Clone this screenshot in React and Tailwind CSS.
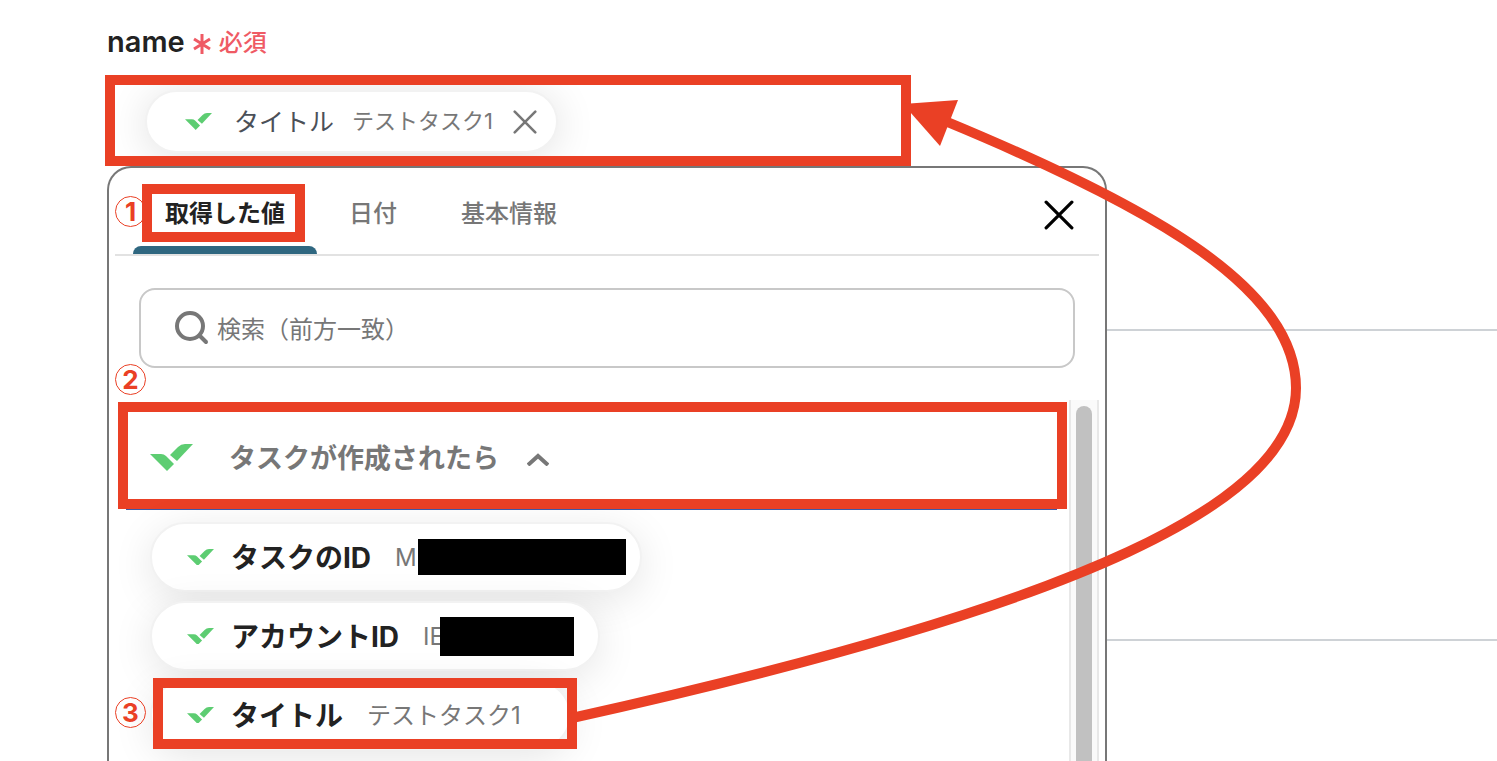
import { useState } from "react";

const tabs = ["取得した値", "日付", "基本情報"];

const values = [
    { label: "タスクのID", value: "M", maskClass: "ml-px h-9 w-[208px]", endClass: "pr-3.5" },
    { label: "アカウントID", value: "IE", maskClass: "-ml-1 h-[39px] w-[134px]", endClass: "pr-6" },
    { label: "タイトル", value: "テストタスク1", maskClass: "", endClass: "pr-12" },
];

function BrandMark({ className }) {
    return (
        <svg viewBox="0 0 43 27" className={className} fill="#5dcd72" aria-hidden="true">
            <path d="M0 10H11Q14 10 16 12L24 20L17 27L14 24z" />
            <path d="M20 11L28 3Q31 0 35 0H43L27 17z" />
        </svg>
    );
}

function CrossIcon({ className }) {
    return (
        <svg viewBox="0 0 28 28" className={className} fill="none" stroke="currentColor" strokeWidth="3" strokeLinecap="round" aria-hidden="true">
            <path d="M2 2l24 24M26 2L2 26" />
        </svg>
    );
}

// Numbered step marker that floats over the panel
function StepNumber({ children, className }) {
    return (
        <span className={`absolute left-[6px] z-10 flex size-[31px] items-center justify-center rounded-full border border-[#ea4025] text-[26px] leading-none font-bold text-[#ea4025] ${className}`}>
            {children}
        </span>
    );
}

function ValueChip({ item }) {
    return (
        <li>
            <button
                type="button"
                className={`flex h-[70px] items-center rounded-full border-2 border-[#f2f2f2] bg-white pl-[35px] shadow-[0_8px_40px_rgba(0,0,0,0.1)] ${item.endClass}`}
            >
                <BrandMark className="mr-[17px] w-[27px]" />
                <span className="mr-6 pt-0.5 text-[28px] font-bold text-[#222]">{item.label}</span>
                <span className="pt-0.5 text-2xl text-[#777]">{item.value}</span>
                {item.maskClass && <span className={`relative bg-black ${item.maskClass}`} />}
            </button>
        </li>
    );
}

export default function App() {
    const [activeTab, setActiveTab] = useState(tabs[0]);
    const [open, setOpen] = useState(true);
    const [search, setSearch] = useState("");

    return (
        <main className="relative flex h-screen flex-col overflow-hidden bg-white pl-[107px] font-['Inter','Noto_Sans_CJK_JP',sans-serif]">
            <h1 className="flex h-[75px] shrink-0 items-center gap-2 pt-2 text-[29px] font-semibold text-[#222]">
                name
                <span className="flex items-center gap-2 text-2xl font-medium text-[#ef5a64]">
                    <svg viewBox="0 0 18 20" className="mt-1 w-[18px]" fill="none" stroke="currentColor" strokeWidth="3" aria-hidden="true">
                        <path d="M9 0v20M1 5l16 10M17 5L1 15" />
                    </svg>
                    <span className="pt-0.5">必須</span>
                </span>
            </h1>

            <div className="relative z-10 -ml-0.5 flex h-[91px] w-[806px] shrink-0 items-center overflow-hidden border-10 border-[#ea4025] pt-0.5 pl-[30px]">
                <div className="flex h-[63px] items-center rounded-full border-2 border-[#f2f2f2] bg-white pr-[19px] pl-[38px] shadow-[0_4px_40px_rgba(0,0,0,0.12)]">
                    <BrandMark className="mr-[22px] w-[27px]" />
                    <span className="mr-[18px] pt-0.5 text-[25px] text-[#4b5058]">タイトル</span>
                    <span className="mr-5 text-[22px] text-[#777]">テストタスク1</span>
                    <button type="button" aria-label="削除" className="text-[#777]">
                        <CrossIcon className="size-6" />
                    </button>
                </div>
            </div>

            <div className="flex min-h-0 flex-1">
                <section className="relative flex min-w-0 basis-[1000px] flex-col rounded-t-3xl border-2 border-b-0 border-[#777] px-1.5">
                    <StepNumber className="top-7">1</StepNumber>
                    <StepNumber className="top-[196px]">2</StepNumber>
                    <StepNumber className="top-[529px]">3</StepNumber>

                    <div className="flex h-22 shrink-0 items-end border-b-2 border-[#e2e2e2] pr-[25px] pl-[18px]">
                        {tabs.map((tab) => (
                            <button
                                key={tab}
                                type="button"
                                onClick={() => setActiveTab(tab)}
                                className={`relative h-[68px] px-8 pb-3 text-2xl ${tab === activeTab ? "font-bold text-[#222]" : "font-medium text-[#777]"}`}
                            >
                                {tab}
                                {tab === activeTab && (
                                    <>
                                        <span className="absolute inset-x-0 bottom-0 h-2 rounded-t-lg bg-[#2f6780]" />
                                        <span className="absolute -top-0.5 right-3 bottom-3 left-[9px] z-20 border-10 border-[#ea4025]" />
                                    </>
                                )}
                            </button>
                        ))}
                        <button type="button" aria-label="閉じる" className="mb-6 ml-auto text-black">
                            <CrossIcon className="size-[30px]" />
                        </button>
                    </div>

                    <label className="mx-6 mt-8 flex h-20 shrink-0 items-center gap-2 rounded-2xl border-2 border-[#c8c8c8] px-[34px]">
                        <svg viewBox="0 0 34 34" className="size-[34px] text-[#777]" fill="none" stroke="currentColor" strokeWidth="4" strokeLinecap="round" aria-hidden="true">
                            <circle cx="15" cy="15" r="13" />
                            <path d="M25 25l6 6" />
                        </svg>
                        <input
                            type="text"
                            aria-label="検索"
                            placeholder="検索（前方一致）"
                            value={search}
                            onChange={(ev) => setSearch(ev.target.value)}
                            className="min-w-0 flex-1 pt-1 text-2xl text-[#222] outline-none placeholder:text-[#777]"
                        />
                    </label>

                    <div className="mt-8 flex min-h-0 flex-1">
                        <div className="flex min-w-0 flex-1 flex-col overflow-hidden pt-0.5 pr-0.5 pl-[3px]">
                            <button
                                type="button"
                                onClick={() => setOpen(!open)}
                                className="flex h-[107px] shrink-0 items-center border-10 border-[#ea4025] pt-1 pl-[22px] text-[27px] font-bold text-[#777]"
                            >
                                <BrandMark className="mr-9 w-[43px]" />
                                <span className="pt-1">タスクが作成されたら</span>
                                <svg viewBox="0 0 22 13" className={`mt-1 ml-7 w-[22px] ${open ? "" : "rotate-180"}`} fill="none" stroke="currentColor" strokeWidth="4" aria-hidden="true">
                                    <path d="M1 12L11 3l10 9" />
                                </svg>
                            </button>
                            <div className="mr-2.5 ml-2 h-px shrink-0 bg-[#3d5aa8]" />
                            {open && (
                                <ul className="relative mt-3 flex flex-col items-start gap-[9px] pl-8">
                                    {values.map((item) => (
                                        <ValueChip key={item.label} item={item} />
                                    ))}
                                    <li className="absolute top-[156px] left-[35px] h-[71px] w-[424px] border-10 border-[#ea4025]" />
                                </ul>
                            )}
                        </div>
                        <div className="flex w-[30px] shrink-0 justify-center border-x-2 border-[#e8e8e8] bg-[#fafafa] pt-1.5">
                            <div className="w-4 rounded-t-full bg-[#c1c1c1]" />
                        </div>
                    </div>
                </section>

                <div className="flex-1 pt-[163px]">
                    <div className="h-[312px] border-y-2 border-[#ced2d6]" />
                </div>
            </div>

            <svg className="pointer-events-none absolute top-0 left-0 z-30" width="1497" height="761" aria-hidden="true">
                <path
                    d="M572 718C1090 603 1296 500 1296 388C1296 290 1160 210 945 121"
                    fill="none"
                    stroke="#ea4025"
                    strokeWidth="10"
                />
                <path d="M903 104l55-4-18 46z" fill="#ea4025" />
            </svg>
        </main>
    );
}
